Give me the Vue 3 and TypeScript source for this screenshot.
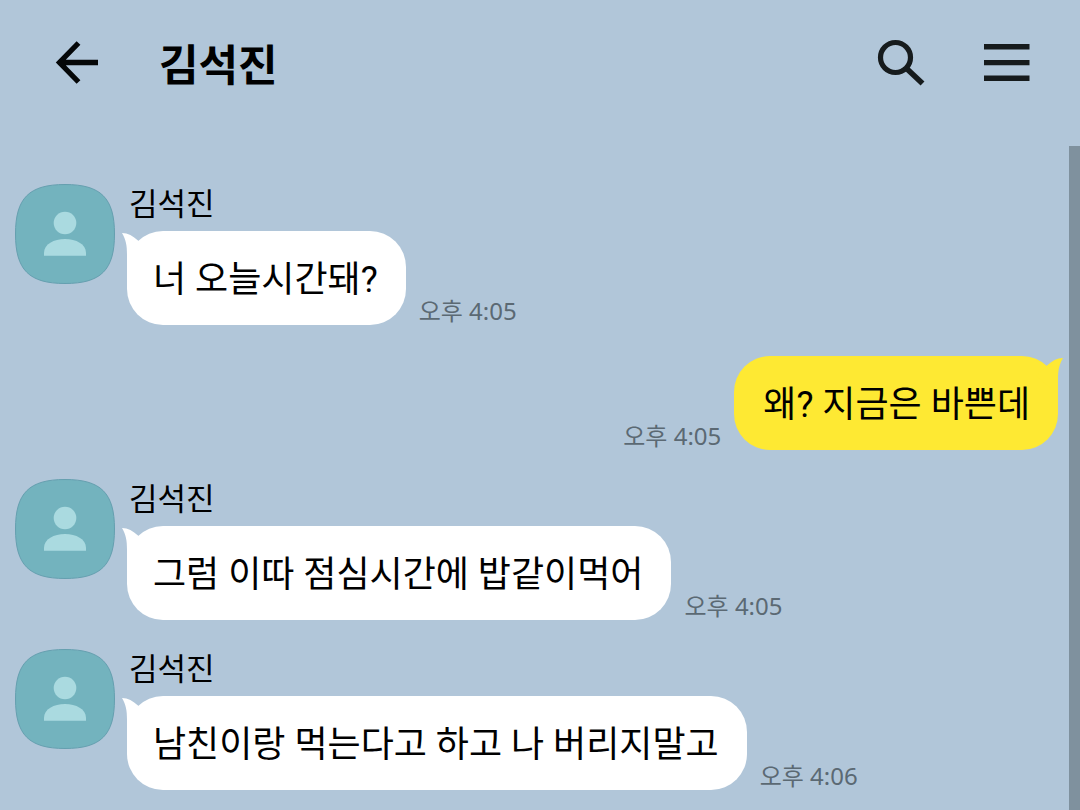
<script setup lang="ts">
interface Message {
  id: number
  mine: boolean
  sender: string
  text: string
  time: string
}

const partner = '김석진'

const messages: Message[] = [
  { id: 1, mine: false, sender: partner, text: '너 오늘시간돼?', time: '오후 4:05' },
  { id: 2, mine: true, sender: '나', text: '왜? 지금은 바쁜데', time: '오후 4:05' },
  { id: 3, mine: false, sender: partner, text: '그럼 이따 점심시간에 밥같이먹어', time: '오후 4:05' },
  { id: 4, mine: false, sender: partner, text: '남친이랑 먹는다고 하고 나 버리지말고', time: '오후 4:06' },
]
</script>

<template>
  <div class="room">
    <header class="bar">
      <button class="icon-button" type="button" aria-label="뒤로">
        <svg width="48" height="48" viewBox="0 0 48 48" fill="none" stroke="#050708" stroke-width="5.300">
          <path d="M26.500 5L7.500 24.500l19 19.500M7.500 24.500H46" />
        </svg>
      </button>
      <h1 class="title">{{ partner }}</h1>
      <button class="icon-button" type="button" aria-label="검색">
        <svg width="48" height="48" viewBox="0 0 48 48" fill="none" stroke="#161b1d">
          <circle cx="18.500" cy="19.500" r="15" stroke-width="5.200" />
          <path d="M28.500 29.500L45.500 45.500" stroke-width="5.600" />
        </svg>
      </button>
      <button class="icon-button menu" type="button" aria-label="메뉴">
        <svg width="48" height="48" viewBox="0 0 48 48" fill="#161b1d">
          <path d="M1 6h45.500v5.500H1zM1 21.900h45.500v5.300H1zM1 37.500h45.500V43H1z" />
        </svg>
      </button>
    </header>

    <main class="body">
      <ol class="messages">
        <li v-for="m in messages" :key="m.id" class="row" :class="{ mine: m.mine }">
          <svg v-if="!m.mine" class="avatar" width="100" height="100" viewBox="0 0 100 100" aria-hidden="true">
            <path
              d="M50 .5C86 .5 99.500 14 99.500 50S86 99.500 50 99.500 .5 86 .5 50 14 .5 50 .5z"
              fill="#73b3be"
              stroke="#659faf"
            />
            <circle cx="50" cy="39" r="11.300" fill="#aadae0" />
            <path d="M29 71.700V69C29 60 39 55 50 55s21 5 21 14v2.700z" fill="#aadae0" />
          </svg>
          <div class="content">
            <span v-if="!m.mine" class="sender">{{ m.sender }}</span>
            <div class="line">
              <p class="bubble">
                <svg class="tail" width="30" height="40" viewBox="-6 0 30 40" aria-hidden="true">
                  <path d="M-5 2C1 2 6 5 11 9.500L22 20 0 38V24C0 14-1 9-5 2z" fill="currentColor" />
                </svg>
                <span class="text">{{ m.text }}</span>
              </p>
              <time class="time">{{ m.time }}</time>
            </div>
          </div>
        </li>
      </ol>
      <div class="scroll-thumb"></div>
    </main>
  </div>
</template>

<style>
body {
  margin: 0;
  background: #b1c6d9;
}
</style>

<style scoped>
.room {
  display: flex;
  flex-direction: column;
  min-height: 100vh;
  background: #b1c6d9;
  color: #000;
  font-family: "Noto Sans CJK KR", "Noto Sans", sans-serif;
}

.bar {
  display: flex;
  align-items: center;
  padding: 31px 49px 53px 52px;
}

.icon-button {
  display: block;
  flex: none;
  padding: 7px 0;
  border: 0;
  background: none;
  cursor: pointer;
}

.icon-button svg {
  display: block;
}

.menu {
  margin-left: 58px;
}

.title {
  flex: 1;
  margin: 0 0 0 59px;
  font-size: 43px;
  line-height: 62px;
  font-weight: 700;
}

.body {
  display: flex;
  flex: 1;
}

.messages {
  display: flex;
  flex: 1;
  flex-direction: column;
  gap: 29px;
  margin: 0;
  padding: 38px 11px 20px 15px;
  list-style: none;
}

.scroll-thumb {
  flex: none;
  width: 11px;
  background: #7f919e;
}

.row {
  display: flex;
  align-items: flex-start;
  gap: 12px;
}

.row.mine {
  justify-content: flex-end;
  padding-top: 2px;
}

.avatar {
  flex: none;
}

.content {
  min-width: 0;
}

.sender {
  display: block;
  height: 47px;
  padding-left: 2px;
  font-size: 31px;
  line-height: 36px;
  box-sizing: border-box;
}

.line {
  display: flex;
  align-items: flex-end;
  gap: 13px;
}

.mine .line {
  flex-direction: row-reverse;
}

.bubble {
  position: relative;
  margin: 0;
  padding: 23px 28px 19px 26px;
  border-radius: 36px;
  background: #fff;
  font-family: Roboto, "Noto Sans CJK KR", sans-serif;
  font-size: 36px;
  line-height: 52px;
}

.mine .bubble {
  padding-left: 29px;
  background: #fee933;
}

.tail {
  position: absolute;
  top: 0;
  left: -6px;
  color: #fff;
}

.mine .tail {
  right: -6px;
  left: auto;
  color: #fee933;
  transform: scaleX(-1);
}

.text {
  position: relative;
}

.time {
  flex: none;
  color: #5b6973;
  font-family: "Noto Sans", "Noto Sans CJK KR", sans-serif;
  font-size: 24px;
  line-height: 28px;
}
</style>
